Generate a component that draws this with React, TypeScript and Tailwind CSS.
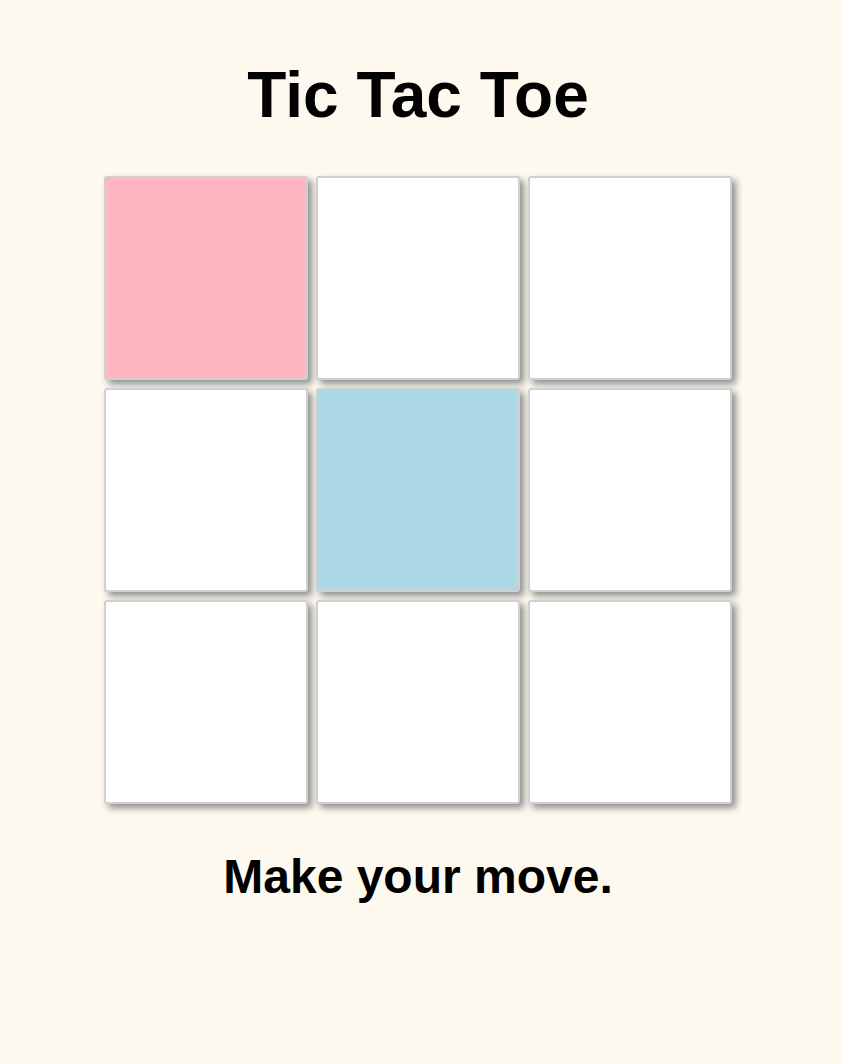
import React from 'react';

const cells = ['X', '', '', '', 'O', '', '', '', ''];

function Cell({ mark }: { mark: string }) {
  const bg = mark === 'X' ? 'bg-[#ffb6c1]' : mark === 'O' ? 'bg-[#add8e6]' : 'bg-white';
  return (
    <button
      className={`h-[204px] w-[204px] rounded-[3px] border-2 border-[#d0d0d0] ${bg} shadow-[4px_4px_7px_#8c8c8c]`}
    />
  );
}

export default function App() {
  return (
    <div className="min-h-[1064px] bg-[#fdf9ef] pr-[6px] font-['Liberation_Sans',Arial,sans-serif] text-black">
      <div className="flex flex-col items-center">
        <h1 className="mt-[57px] text-[64px] font-bold leading-[76px]">Tic Tac Toe</h1>
        <div className="mt-[43px] grid grid-cols-[repeat(3,204px)] gap-[8px]">
          {cells.map((m, i) => (
            <Cell key={i} mark={m} />
          ))}
        </div>
        <p className="mt-[45px] text-[48px] font-bold leading-[56px]">Make your move.</p>
      </div>
    </div>
  );
}
